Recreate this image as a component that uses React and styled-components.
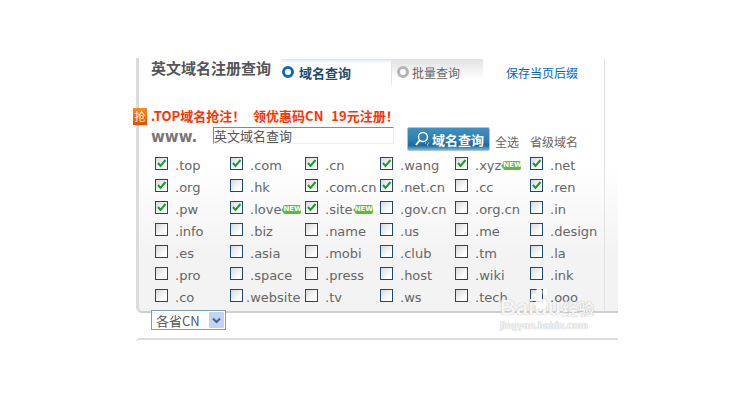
import styled, { createGlobalStyle } from 'styled-components';

const GlobalStyle = createGlobalStyle`
  html, body {
    margin: 0;
    padding: 0;
    background: #fff;
  }
  body {
    font-family: 'DejaVu Sans', 'Noto Sans CJK SC', sans-serif;
  }
`;

const cjk = `'Noto Sans CJK SC', sans-serif`;

const Page = styled.div`
  position: relative;
  width: 750px;
  height: 400px;
  overflow: hidden;
  padding: 58px 0 0 136px;
  box-sizing: border-box;
`;

const Card = styled.section`
  width: 482px;
  height: 255px;
  box-sizing: border-box;
  border-left: 3px solid #dcdcdc;
  border-bottom: 2px solid #cfcfcf;
  border-bottom-left-radius: 6px;
  background: linear-gradient(180deg, #fff 0, #fff 105px, #f3f3f3 200px, #f3f3f3 100%);
`;

const Inner = styled.div`
  width: 466px;
  height: 253px;
  box-sizing: border-box;
  border-right: 1px solid #e2e2e2;
  padding-left: 12px;
`;

const TabBar = styled.div`
  display: flex;
  align-items: flex-start;
  height: 50px;
`;

const Title = styled.h2`
  margin: 1px 0 0;
  width: 131px;
  font: bold 15px/18px ${cjk};
  color: #555;
  white-space: nowrap;
`;

const Tab = styled.div`
  display: flex;
  align-items: center;
  box-sizing: border-box;
  height: 26px;
  margin-top: 1px;
  width: ${(p) => p.$width}px;
  padding-left: ${(p) => p.$pad}px;
  font: ${(p) => (p.$active ? 'bold 13px' : 'normal 12px')} ${cjk};
  color: ${(p) => (p.$active ? '#1c4a70' : '#666')};
  background: ${(p) =>
    p.$active
      ? 'linear-gradient(180deg, #dbe6f2 0, #fff 4px)'
      : 'linear-gradient(180deg, #e2e2e2 0, #fff 20px)'};
  border-left: ${(p) => (p.$active ? 'none' : '1px solid #e6e6e6')};
`;

const Radio = styled.span`
  box-sizing: border-box;
  flex: none;
  width: 12px;
  height: 12px;
  margin-right: ${(p) => p.$gap}px;
  border-radius: 50%;
  background: #fff;
  border: 3px solid ${(p) => (p.$active ? '#1668b8' : '#b4b4b4')};
`;

const SaveLink = styled.a`
  margin: 7px 0 0 23px;
  font: 12px/16px ${cjk};
  color: #0066cc;
`;

const Promo = styled.div`
  position: relative;
  height: 19px;
  font: bold 13px/16px ${cjk};
  color: #ff3300;
  white-space: nowrap;
  word-spacing: 5px;
`;

const PromoMark = styled.span`
  position: absolute;
  left: -18px;
  top: 0;
  width: 14px;
  height: 17px;
  background: linear-gradient(180deg, #ff8a1e, #e84a00);
  color: #fff;
  font: 11px/16px ${cjk};
  text-align: center;
`;

const SearchRow = styled.div`
  display: flex;
  align-items: flex-start;
  height: 30px;
`;

const Www = styled.span`
  width: 62px;
  padding-top: 1px;
  font: bold 15px/18px 'DejaVu Sans', sans-serif;
  color: #777;
`;

const QueryInput = styled.div`
  box-sizing: border-box;
  width: 181px;
  height: 17px;
  border-top: 1px solid #888;
  border-left: 1px solid #888;
  border-right: 1px solid #eee;
  border-bottom: 1px solid #eee;
  font: 13px/15px ${cjk};
  color: #555;
  white-space: nowrap;
`;

const SearchButton = styled.button`
  display: flex;
  align-items: center;
  justify-content: center;
  gap: 1px;
  box-sizing: border-box;
  width: 83px;
  height: 24px;
  margin-left: 13px;
  padding: 0;
  border: 1px solid #a9c5d8;
  border-radius: 2px;
  background: linear-gradient(180deg, #3f8fc0 0, #2f7fb0 50%, #1f6a9a 80%, #7fb3d0 100%);
  color: #fff;
  font: bold 13px ${cjk};
`;

const SideLinks = styled.div`
  display: flex;
  gap: 11px;
  margin: 7px 0 0 5px;
  font: 12px/16px ${cjk};
  color: #666;
  white-space: nowrap;
`;

const Grid = styled.div`
  display: grid;
  grid-template-columns: repeat(6, 75px);
  grid-auto-rows: 22px;
  padding-left: 4px;
`;

const Item = styled.label`
  display: flex;
  align-items: flex-start;
  font: 13px/17px 'DejaVu Sans', sans-serif;
  color: #666;
  white-space: nowrap;
`;

const Box = styled.span`
  display: block;
  box-sizing: border-box;
  flex: none;
  width: 13px;
  height: 13px;
  border: 1px solid #1c4a70;
  background: linear-gradient(135deg, #d8d8d8, #fff 75%);
`;

const Name = styled.span`
  margin-left: ${(p) => (p.$tight ? 3 : 7)}px;
`;

const NewBadge = styled.span`
  display: inline-block;
  position: relative;
  width: 18px;
  height: 9px;
  margin-left: 2px;
  border-radius: 2px;
  background: #5fba3c;
  color: #fff;
  font: bold 7px/9px 'DejaVu Sans', sans-serif;
  text-align: center;
  vertical-align: 3px;

  &::before {
    content: '';
    position: absolute;
    left: -2px;
    top: 3px;
    border-top: 2px solid transparent;
    border-bottom: 2px solid transparent;
    border-right: 2px solid #5fba3c;
  }
`;

const SelectRow = styled.div`
  position: relative;
  margin: -3px 0 0 15px;
`;

const Select = styled.div`
  display: flex;
  align-items: center;
  justify-content: space-between;
  box-sizing: border-box;
  width: 75px;
  height: 20px;
  padding: 0 1px 0 4px;
  border: 1px solid #7f9db9;
  background: #fff;
  font: 13px ${cjk};
  color: #555;
`;

const SelectArrow = styled.span`
  display: flex;
  align-items: center;
  justify-content: center;
  width: 15px;
  height: 16px;
  background: #c3d3f5;
  border-radius: 1px;
`;

const NextCard = styled.div`
  box-sizing: border-box;
  width: 482px;
  height: 20px;
  margin-top: 8px;
  border-top: 2px solid #dcdcdc;
  border-top-left-radius: 4px;
`;

const Watermark = styled.div`
  position: absolute;
  left: 500px;
  top: 296px;
  color: rgba(255, 255, 255, 0.92);
  text-shadow: 0 0 1px #999;
  pointer-events: none;
`;

const WatermarkLogo = styled.div`
  font: bold 22px/22px 'Liberation Sans', sans-serif;
  white-space: nowrap;
`;

const WatermarkSite = styled.div`
  font: bold 10px/11px 'Liberation Sans', sans-serif;
  white-space: nowrap;
`;

const WatermarkCn = styled.span`
  font: bold 16px ${cjk};
  margin-left: 1px;
`;

const WatermarkPaw = styled.svg`
  position: absolute;
  left: 30px;
  top: -9px;
`;

const Tick = () => (
  <svg width="11" height="11" viewBox="0 0 11 11" style={{ display: 'block' }}>
    <path d="M2 5 L4.5 8 L9.5 2" fill="none" stroke="#1d9a2c" strokeWidth="2" />
  </svg>
);

const SearchIcon = () => (
  <svg width="18" height="18" viewBox="0 0 18 18">
    <circle cx="10" cy="7" r="4.5" fill="none" stroke="#fff" strokeWidth="1.4" />
    <path d="M7 10 L3 15" stroke="#fff" strokeWidth="2" />
    <path d="M12 13 h1 M15 13 h1 M14 15 h1" stroke="#fff" strokeWidth="1" />
  </svg>
);

const Chevron = () => (
  <svg width="9" height="7" viewBox="0 0 9 7">
    <path d="M1 1.5 L4.5 5 L8 1.5" fill="none" stroke="#4d6185" strokeWidth="2" />
  </svg>
);

const domains = [
  ['.top', 1], ['.com', 1], ['.cn', 1], ['.wang', 1], ['.xyz', 1, 1], ['.net', 1],
  ['.org', 1], ['.hk'], ['.com.cn', 1], ['.net.cn', 1], ['.cc'], ['.ren', 1],
  ['.pw', 1], ['.love', 1, 1], ['.site', 1, 1], ['.gov.cn'], ['.org.cn'], ['.in'],
  ['.info'], ['.biz'], ['.name'], ['.us'], ['.me'], ['.design'],
  ['.es'], ['.asia'], ['.mobi'], ['.club'], ['.tm'], ['.la'],
  ['.pro'], ['.space'], ['.press'], ['.host'], ['.wiki'], ['.ink'],
  ['.co'], ['.website'], ['.tv'], ['.ws'], ['.tech'], ['.ooo'],
];

const App = () => {
  return (
    <Page>
      <GlobalStyle />
      <Card>
        <Inner>
          <TabBar>
            <Title>英文域名注册查询</Title>
            <Tab $active $width={109} $pad={0}>
              <Radio $active $gap={5} />
              域名查询
            </Tab>
            <Tab $width={92} $pad={5}>
              <Radio $gap={3} />
              批量查询
            </Tab>
            <SaveLink>保存当页后缀</SaveLink>
          </TabBar>
          <Promo>
            <PromoMark>抢</PromoMark>
            .TOP域名抢注！ 领优惠码CN 19元注册！
          </Promo>
          <SearchRow>
            <Www>www.</Www>
            <QueryInput>英文域名查询</QueryInput>
            <SearchButton>
              <SearchIcon />
              域名查询
            </SearchButton>
            <SideLinks>
              <span>全选</span>
              <span>省级域名</span>
            </SideLinks>
          </SearchRow>
          <Grid>
            {domains.map(([name, checked, isNew]) => (
              <Item key={name}>
                <Box>{checked && <Tick />}</Box>
                <Name $tight={name === '.website'}>
                  {name}
                  {isNew && <NewBadge>NEW</NewBadge>}
                </Name>
              </Item>
            ))}
          </Grid>
        </Inner>
      </Card>
      <SelectRow>
        <Select>
          各省CN
          <SelectArrow>
            <Chevron />
          </SelectArrow>
        </Select>
      </SelectRow>
      <NextCard />
      <Watermark>
        <WatermarkPaw width="20" height="24" viewBox="0 0 20 24" fill="rgba(255,255,255,0.85)">
          <ellipse cx="4" cy="10" rx="2.5" ry="3.5" />
          <ellipse cx="9" cy="4" rx="2.5" ry="3.5" />
          <ellipse cx="15" cy="5" rx="2.5" ry="3.5" />
          <ellipse cx="11" cy="17" rx="6" ry="5" />
        </WatermarkPaw>
        <WatermarkLogo>
          Baidu<WatermarkCn>经验</WatermarkCn>
        </WatermarkLogo>
        <WatermarkSite>jingyan.baidu.com</WatermarkSite>
      </Watermark>
    </Page>
  );
};

export default App;
